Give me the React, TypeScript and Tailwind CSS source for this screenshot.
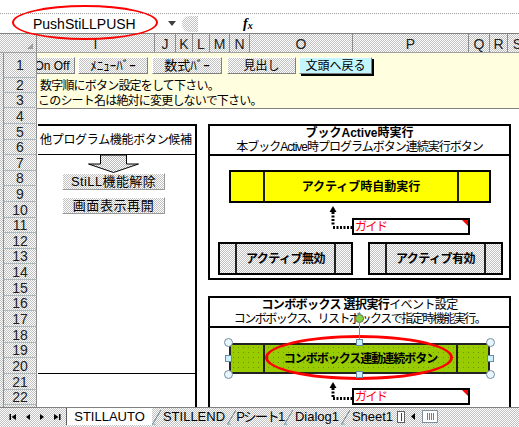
import React from 'react';

const dither = 'bg-[image:repeating-conic-gradient(#c0c0c0_0_25%,#ffffff_0_50%)] bg-size-[2px_2px]';

const rowHeights = [
  'h-[25px]', 'h-[15px]', 'h-[15px]', 'h-[16px]', 'h-[16px]', 'h-[15px]', 'h-[16px]', 'h-[15px]',
  'h-[16px]', 'h-[16px]', 'h-[15px]', 'h-[16px]', 'h-[15px]', 'h-[16px]', 'h-[16px]', 'h-[15px]',
  'h-[16px]', 'h-[16px]', 'h-[15px]', 'h-[16px]', 'h-[16px]', 'h-[15px]', 'h-[16px]',
];

const columns = [
  { label: 'I', w: 'w-[118px]' },
  { label: 'J', w: 'w-[21px]' },
  { label: 'K', w: 'w-[17px]' },
  { label: 'L', w: 'w-[17px]' },
  { label: 'M', w: 'w-[20px]' },
  { label: 'N', w: 'w-[20px]' },
  { label: 'O', w: 'w-[103px]' },
  { label: 'P', w: 'w-[116px]' },
  { label: 'Q', w: 'w-[21px]' },
  { label: 'R', w: 'w-[18px]' },
  { label: 'S', w: 'w-[20px]' },
];

function ToolBtn({ className, children }: { className: string; children: React.ReactNode }) {
  return (
    <div
      className={`flex-none h-[17px] flex items-center justify-center text-[12px] leading-none whitespace-nowrap border border-t-white border-l-white border-r-[#808080] border-b-[#808080] ${dither} ${className}`}
    >
      {children}
    </div>
  );
}

function Guide() {
  return (
    <div className="relative w-[118px] h-[17px] border-2 border-black bg-white flex items-center pl-[1px] text-[12px] leading-none text-[#ff0000] tracking-[-1.5px]">
      ガイド
      <svg className="absolute top-0 right-0" width="6" height="6" viewBox="0 0 6 6">
        <polygon points="0,0 6,0 6,6" fill="#ff0000" />
      </svg>
    </div>
  );
}

function DotArrow({ h, className }: { h: number; className?: string }) {
  return (
    <svg width="24" height={h} viewBox={`0 0 24 ${h}`} className={`flex-none ${className ?? ''}`}>
      <polygon points="5,0 1.5,6 8.5,6" fill="#000" />
      <line x1="5" y1="6" x2="5" y2={h - 3} stroke="#000" strokeWidth="3" strokeDasharray="2 1.5" />
      <line x1="5" y1={h - 1.5} x2="24" y2={h - 1.5} stroke="#000" strokeWidth="3" strokeDasharray="2 1.5" />
    </svg>
  );
}

function GrayBlock({ label }: { label: string }) {
  return (
    <div className={`w-[135px] h-[33px] border-2 border-black flex ${dither}`}>
      <div className="w-[15px] flex-none" />
      <div className="flex-1 border-x-2 border-[#202020] flex items-center justify-center font-bold text-[12px] tracking-[-0.5px]">
        {label}
      </div>
      <div className="w-[15px] flex-none" />
    </div>
  );
}

function Handles() {
  const circle = 'absolute w-[9px] h-[9px] rounded-full border border-[#7a8a9a] bg-[#e6f6ff]';
  const square = 'absolute w-[7px] h-[7px] border border-[#6a8aa0] bg-[#c8f0ff]';
  return (
    <>
      <div className="absolute left-[130px] top-[-20px] w-px h-[20px] bg-[#8090a0]" />
      <div className="absolute left-[126px] top-[-29px] w-[9px] h-[9px] rounded-full bg-[#88d040] border border-[#5a7a5a]" />
      <div className={`${circle} left-[-5px] top-[-5px]`} />
      <div className={`${circle} right-[-5px] top-[-5px]`} />
      <div className={`${circle} left-[-5px] bottom-[-5px]`} />
      <div className={`${circle} right-[-5px] bottom-[-5px]`} />
      <div className={`${square} left-[-4px] top-[12px]`} />
      <div className={`${square} right-[-4px] top-[12px]`} />
      <div className={`${square} left-[127px] top-[-4px]`} />
      <div className={`${square} left-[127px] bottom-[-4px]`} />
    </>
  );
}

function Slant() {
  return (
    <svg width="9" height="20" viewBox="0 0 9 20" className="flex-none">
      <line x1="0" y1="17" x2="9" y2="2" stroke="#6f7f86" strokeWidth="1" />
      <polygon points="0,17 4,17 2,14" fill="#9cc0cc" />
    </svg>
  );
}

function Tab({ w, active, className, children }: { w: string; active?: boolean; className?: string; children: React.ReactNode }) {
  return (
    <div
      className={`flex-none ${w} h-[17px] flex items-center justify-center text-[13px] leading-none whitespace-nowrap ${active ? 'bg-white border-l border-[#606060]' : ''} ${className ?? ''}`}
    >
      {children}
    </div>
  );
}

export default function App() {
  return (
    <div className="relative w-[519px] h-[427px] overflow-hidden bg-white flex flex-col text-black font-['Liberation_Sans','Noto_Sans_CJK_JP',sans-serif]">
      {/* top strip */}
      <div className="h-[14px] flex-none border-b border-dotted border-[#a0a0a0]" />

      {/* formula bar */}
      <div className="h-[20px] flex-none flex items-center border-b border-[#808080]">
        <div className="ml-[5px] w-[160px] h-full flex items-center pl-[28px] text-[14px] leading-none">PushStiLLPUSH</div>
        <svg width="8" height="5" viewBox="0 0 8 5" className="ml-[3px] flex-none">
          <polygon points="0,0 8,0 4,5" fill="#404040" />
        </svg>
        <div className={`ml-[6px] w-[16px] h-[16px] rounded-l-full flex-none ${dither}`} />
        <div className="ml-[45px] flex items-end font-['Liberation_Serif',serif] italic font-bold leading-none">
          <span className="text-[14px]">f</span>
          <span className="text-[10px]">x</span>
        </div>
      </div>

      {/* column headers */}
      <div className={`h-[19px] flex-none flex border-b border-[#a0a0a0] ${dither}`}>
        <div className="w-[37px] flex-none border-r border-[#8c8c8c] relative">
          <svg className="absolute right-[3px] bottom-[3px]" width="6" height="6" viewBox="0 0 6 6">
            <polygon points="6,0 6,6 0,6" fill="#a0a0a0" />
          </svg>
        </div>
        {columns.map((c) => (
          <div
            key={c.label}
            className={`flex-none ${c.w} border-r border-[#8c8c8c] flex items-end justify-center pb-[1px] text-[14px] leading-none text-[#202020]`}
          >
            {c.label}
          </div>
        ))}
      </div>

      {/* sheet body */}
      <div className="h-[354px] flex-none flex overflow-hidden">
        <div className={`w-[37px] flex-none pl-[3px] ${dither}`}>
          {rowHeights.map((h, i) => (
            <div
              key={i}
              className={`${h} flex items-center justify-center border-b border-[#a9b9bd] border-x border-x-[#8c8c8c] text-[14px] leading-none text-[#202020]`}
            >
              {i < 22 ? i + 1 : ''}
            </div>
          ))}
        </div>

        <div className="flex-1 min-w-0 overflow-hidden flex flex-col">
          {/* rows 1-3 */}
          <div className="flex-none bg-[#ffffe0] border-b border-[#808080]">
            <div className="h-[25px] flex items-start pt-[4px]">
              <ToolBtn className="w-[46px] ml-[-8px]">On Off</ToolBtn>
              <ToolBtn className="w-[70px] ml-[3px] text-[13px]">ﾒﾆｭｰﾊﾞｰ</ToolBtn>
              <ToolBtn className="w-[70px] ml-[4px] text-[13px]">数式ﾊﾞｰ</ToolBtn>
              <ToolBtn className="w-[69px] ml-[5px]">見出し</ToolBtn>
              <div className="flex-none ml-[3px] w-[73px] h-[17px] flex items-center justify-center text-[12px] leading-none bg-[#c4f6ff] border border-t-white border-l-white border-r-[#808080] border-b-[#808080] shadow-[2px_2px_0_#000]">
                文頭へ戻る
              </div>
            </div>
            <div className="h-[15px] flex items-center pl-[3px] text-[12px] leading-none tracking-[-0.8px]">
              数字順にボタン設定をして下さい。
            </div>
            <div className="h-[15px] flex items-center pl-[1px] text-[12px] leading-none tracking-[-0.8px]">
              このシート名は絶対に変更しないで下さい。
            </div>
          </div>

          <div className="flex pt-[15px]">
            {/* left panel */}
            <div className="ml-[1px] w-[159px] h-[300px] flex-none border-t-2 border-r-2 border-black flex flex-col">
              <div className="h-[29px] flex-none border-b border-black flex items-center pl-[2px] text-[12px] leading-none tracking-[-0.3px]">
                他プログラム機能ボタン候補
              </div>
              <div className="h-[219px] flex-none border-b border-black flex flex-col items-start">
                <svg width="51" height="18" viewBox="0 0 51 18" className="ml-[50px] flex-none">
                  <defs>
                    <pattern id="dz" width="2" height="2" patternUnits="userSpaceOnUse">
                      <rect width="2" height="2" fill="#ffffff" />
                      <rect width="1" height="1" fill="#b8b8b8" />
                      <rect x="1" y="1" width="1" height="1" fill="#b8b8b8" />
                    </pattern>
                  </defs>
                  <polygon
                    points="12.5,0 38.5,0 38.5,9 50.5,9 25.5,17.5 0.5,9 12.5,9"
                    fill="url(#dz)"
                    stroke="#000"
                    strokeWidth="1"
                  />
                </svg>
                <div
                  className={`ml-[24px] w-[103px] h-[17px] flex items-center justify-center text-[13px] leading-none tracking-[0.4px] border border-t-white border-l-white border-r-[#9a9a9a] border-b-[#9a9a9a] ${dither}`}
                >
                  StiLL機能解除
                </div>
                <div
                  className={`ml-[24px] mt-[7px] w-[103px] h-[17px] flex items-center justify-center text-[13px] leading-none tracking-[0.6px] border border-t-white border-l-white border-r-[#9a9a9a] border-b-[#9a9a9a] ${dither}`}
                >
                  画面表示再開
                </div>
              </div>
            </div>

            {/* right column */}
            <div className="ml-[11px] w-[303px] flex-none flex flex-col">
              <div className="h-[156px] border-2 border-black flex flex-col">
                <div className="h-[30px] flex-none border-b-2 border-black flex flex-col items-center justify-center leading-[14px] text-[12px]">
                  <div className="font-bold">ブックActive時実行</div>
                  <div className="tracking-[-1px]">本ブックActive時プログラムボタン連続実行ボタン</div>
                </div>
                <div className="mt-[14px] ml-[19px] w-[262px] h-[33px] flex-none border-2 border-black bg-[#ffff00] flex">
                  <div className="w-[32px] flex-none" />
                  <div className="flex-1 border-x-2 border-[#202020] flex items-center justify-center font-bold text-[12px] leading-none">
                    アクティブ時自動実行
                  </div>
                  <div className="w-[30px] flex-none" />
                </div>
                <div className="h-[39px] flex-none flex items-start">
                  <DotArrow h={23} className="ml-[118px] mt-[3px]" />
                  <div className="mt-[15px]">
                    <Guide />
                  </div>
                </div>
                <div className="flex ml-[8px] gap-[15px]">
                  <GrayBlock label="アクティブ無効" />
                  <GrayBlock label="アクティブ有効" />
                </div>
              </div>

              <div className="mt-[16px] h-[140px] flex-none border-2 border-black flex flex-col">
                <div className="h-[30px] flex-none border-b-2 border-black flex flex-col items-center justify-center leading-[14px] text-[12px]">
                  <div className="tracking-[-0.6px]">
                    <span className="font-bold">コンボボックス 選択実行</span>イベント設定
                  </div>
                  <div className="tracking-[-1.5px]">コンボボックス、リストボックスで指定時機能実行。</div>
                </div>
                <div className="relative mt-[15px] ml-[19px] w-[261px] h-[31px] flex-none">
                  <div className="w-full h-full border-2 border-[#222] bg-[#99cc00] bg-[image:radial-gradient(#6f9400_0.6px,transparent_0.9px)] bg-size-[5px_5px] flex">
                    <div className="w-[32px] flex-none" />
                    <div className="flex-1 border-x-2 border-[#202020] flex items-center justify-center font-bold text-[12px] leading-none tracking-[-1px]">
                      コンボボックス連動連続ボタン
                    </div>
                    <div className="w-[30px] flex-none" />
                  </div>
                  <div className="absolute left-[36px] top-[-8px] w-[188px] h-[45px] rounded-[50%] border-[3px] border-[#ff0000]" />
                  <Handles />
                </div>
                <div className="h-[39px] flex-none flex items-start">
                  <DotArrow h={18} className="ml-[118px] mt-[8px]" />
                  <div className="mt-[14px]">
                    <Guide />
                  </div>
                </div>
              </div>
            </div>
          </div>
        </div>
      </div>

      {/* sheet tabs */}
      <div className={`h-[20px] flex-none flex items-start border-t border-[#808080] ${dither}`}>
        <div className="w-[66px] h-[17px] flex-none flex items-center">
          <svg width="8" height="8" viewBox="0 0 8 8" className="ml-[9px] flex-none">
            <rect x="0.5" y="1" width="1.5" height="6" fill="#000" />
            <polygon points="7,1 2.5,4 7,7" fill="#000" />
          </svg>
          <svg width="8" height="8" viewBox="0 0 8 8" className="ml-[7px] flex-none">
            <polygon points="6,1 2,4 6,7" fill="#000" />
          </svg>
          <svg width="8" height="8" viewBox="0 0 8 8" className="ml-[6px] flex-none">
            <polygon points="2,1 6,4 2,7" fill="#000" />
          </svg>
          <svg width="8" height="8" viewBox="0 0 8 8" className="ml-[7px] flex-none">
            <polygon points="1,1 5.5,4 1,7" fill="#000" />
            <rect x="6" y="1" width="1.5" height="6" fill="#000" />
          </svg>
        </div>
        <Tab w="w-[86px]" active>STILLAUTO</Tab>
        <Slant />
        <Tab w="w-[66px]">STILLEND</Tab>
        <Slant />
        <Tab w="w-[48px]" className="text-[12px] tracking-[-1.5px]">Pシート1</Tab>
        <Slant />
        <Tab w="w-[48px]">Dialog1</Tab>
        <Slant />
        <Tab w="w-[45px]">Sheet1</Tab>
        <div className="ml-[2px] mt-[3px] w-[8px] h-[12px] flex-none border border-[#606060] bg-white flex items-center justify-center">
          <div className="w-px h-[8px] bg-[#404040]" />
        </div>
        <svg width="8" height="17" viewBox="0 0 8 17" className="ml-[4px] flex-none">
          <polygon points="6,5 2,8.5 6,12" fill="#000" />
        </svg>
        <div className="ml-[5px] mt-[2px] w-[16px] h-[13px] flex-none border border-[#8090a0] bg-white flex items-center justify-center gap-px">
          <div className="w-px h-[7px] bg-[#6080a0]" />
          <div className="w-px h-[7px] bg-[#6080a0]" />
          <div className="w-px h-[7px] bg-[#6080a0]" />
          <div className="w-px h-[7px] bg-[#6080a0]" />
        </div>
      </div>

      {/* name box highlight */}
      <div className="absolute left-[12px] top-[5px] w-[146px] h-[35px] rounded-[50%] border-2 border-[#ff0000]" />
    </div>
  );
}
